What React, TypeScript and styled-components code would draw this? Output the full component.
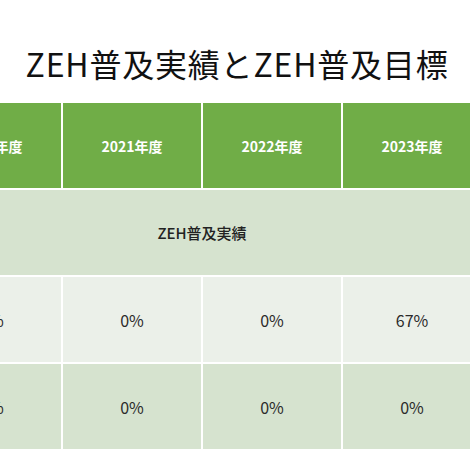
import React from "react";
import styled, { createGlobalStyle } from "styled-components";

const GlobalStyle = createGlobalStyle`
  html, body {
    margin: 0;
    padding: 0;
    background: #ffffff;
  }
  body {
    font-family: "Noto Sans CJK JP", "Noto Sans", sans-serif;
  }
`;

const Page = styled.div`
  width: 470px;
  height: 470px;
  overflow: hidden;
  display: flex;
  flex-direction: column;
  background: #ffffff;
`;

const TitleBar = styled.div`
  height: 103px;
  display: flex;
  align-items: center;
  justify-content: center;
  padding: 22px 0 0 4px;
  box-sizing: border-box;
`;

const Title = styled.h1`
  margin: 0;
  font-family: "Noto Sans CJK JP", sans-serif;
  font-weight: 400;
  font-size: 32px;
  line-height: 1;
  color: #111111;
  letter-spacing: 0.8px;
`;

const Table = styled.div`
  margin-left: -77px;
  display: grid;
  grid-template-columns: repeat(4, 138px);
  grid-auto-rows: 85px;
  gap: 2px;
  background: #ffffff;
  width: max-content;
`;

type Tone = "header" | "band" | "light";

const Cell = styled.div<{ $tone: Tone; $span?: number }>`
  display: flex;
  align-items: center;
  justify-content: center;
  grid-column: span ${(p) => p.$span ?? 1};
  background: ${(p) =>
    p.$tone === "header" ? "#70ad47" : p.$tone === "band" ? "#d6e3cf" : "#ebf0e9"};
  color: ${(p) => (p.$tone === "header" ? "#ffffff" : "#2b2b2b")};
  font-family: "Noto Sans CJK JP", sans-serif;
  font-size: ${(p) => (p.$tone === "header" ? "14px" : "16px")};
  font-weight: ${(p) => (p.$tone === "header" ? 700 : 400)};
`;

const MergedLabel = styled.span`
  font-size: 15px;
  font-weight: 500;
  color: #222222;
`;

const years = ["2020年度", "2021年度", "2022年度", "2023年度"];
const actual = ["0%", "0%", "0%", "67%"];
const target = ["0%", "0%", "0%", "0%"];

export default function App() {
  return (
    <>
      <GlobalStyle />
      <Page>
        <TitleBar>
          <Title>ZEH普及実績とZEH普及目標</Title>
        </TitleBar>
        <Table>
          {years.map((y) => (
            <Cell key={y} $tone="header">
              {y}
            </Cell>
          ))}
          <Cell $tone="band" $span={4}>
            <MergedLabel>ZEH普及実績</MergedLabel>
          </Cell>
          {actual.map((v, i) => (
            <Cell key={"a" + i} $tone="light">
              {v}
            </Cell>
          ))}
          {target.map((v, i) => (
            <Cell key={"t" + i} $tone="band">
              {v}
            </Cell>
          ))}
        </Table>
      </Page>
    </>
  );
}
